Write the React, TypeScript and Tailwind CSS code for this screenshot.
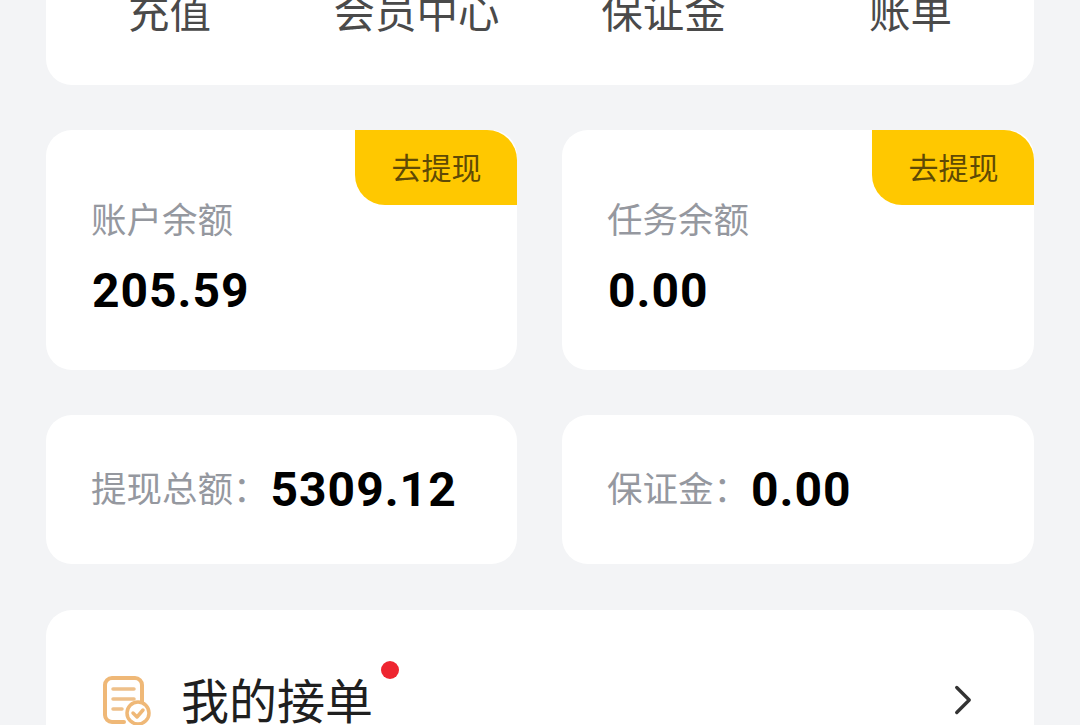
import { ChevronRight } from 'lucide-react'

const cjk = "font-['Roboto','Noto_Sans_CJK_SC',sans-serif]"

function OrderIcon() {
  return (
    <svg width="50" height="50" viewBox="0 0 50 50" fill="none" className="shrink-0">
      <path d="M22 46H10a7 7 0 0 1-7-7V9a7 7 0 0 1 7-7h23a7 7 0 0 1 7 7v17" stroke="#efb877" strokeWidth="4" strokeLinecap="round" />
      <path d="M11 13h21M11 23h21M11 33h9" stroke="#eec08a" strokeWidth="3.5" strokeLinecap="round" />
      <circle cx="36" cy="37" r="11" fill="#fff" stroke="#efb877" strokeWidth="3.5" />
      <path d="M31 37l4 4 6-7" stroke="#efb877" strokeWidth="3.5" strokeLinecap="round" strokeLinejoin="round" />
    </svg>
  )
}

function BalanceCard({ label, value }: { label: string; value: string }) {
  return (
    <div className="relative h-[240px] rounded-[26px] bg-white pl-[45px] pt-[71px]">
      <div className="absolute right-0 top-0 flex h-[75px] w-[162px] items-center justify-center rounded-tr-[30px] rounded-bl-[30px] bg-[#ffc800] pl-[1px] pt-[2px] text-[30px] text-[#5f4a05]">
        去提现
      </div>
      <p className="text-[35.5px] leading-[40px] text-[#95989f]">{label}</p>
      <p className="ml-[1px] mt-[25px] text-[48px] font-bold leading-[50px] tracking-[1px] text-black">{value}</p>
    </div>
  )
}

function StatCard({ label, value }: { label: string; value: string }) {
  return (
    <div className="flex h-[149px] items-center rounded-[26px] bg-white pl-[45px]">
      <span className="pt-[3px] text-[35.5px] text-[#95989f]">{label}</span>
      <span className="ml-[2px] text-[48px] font-bold tracking-[1px] text-black">{value}</span>
    </div>
  )
}

export default function App() {
  return (
    <div className={`h-[725px] w-[1080px] overflow-hidden bg-[#f3f4f6] px-[46px] ${cjk}`}>
      <div className="-mt-[14px] grid h-[99px] grid-cols-4 rounded-b-[26px] bg-white text-center text-[41.5px] leading-[56px] text-[#4a4a4a]">
        {['充值', '会员中心', '保证金', '账单'].map((item) => (
          <span key={item}>{item}</span>
        ))}
      </div>
      <div className="mt-[45px] grid grid-cols-[471px_472px] gap-[45px]">
        <BalanceCard label="账户余额" value="205.59" />
        <BalanceCard label="任务余额" value="0.00" />
        <StatCard label="提现总额：" value="5309.12" />
        <StatCard label="保证金：" value="0.00" />
      </div>
      <div className="mt-[46px] flex h-[180px] items-start rounded-t-[26px] bg-white px-[56px] pt-[66px]">
        <OrderIcon />
        <div className="relative ml-[29px] flex-1">
          <span className="text-[48px] leading-[54px] text-[#1f1f1f]">我的接单</span>
          <span className="absolute left-[200px] -top-[15px] h-[18px] w-[18px] rounded-full bg-[#ee2530]" />
        </div>
        <ChevronRight className="mt-[-1px] -mr-[10px] h-[50px] w-[50px] text-[#333]" strokeWidth={1.6} />
      </div>
    </div>
  )
}
